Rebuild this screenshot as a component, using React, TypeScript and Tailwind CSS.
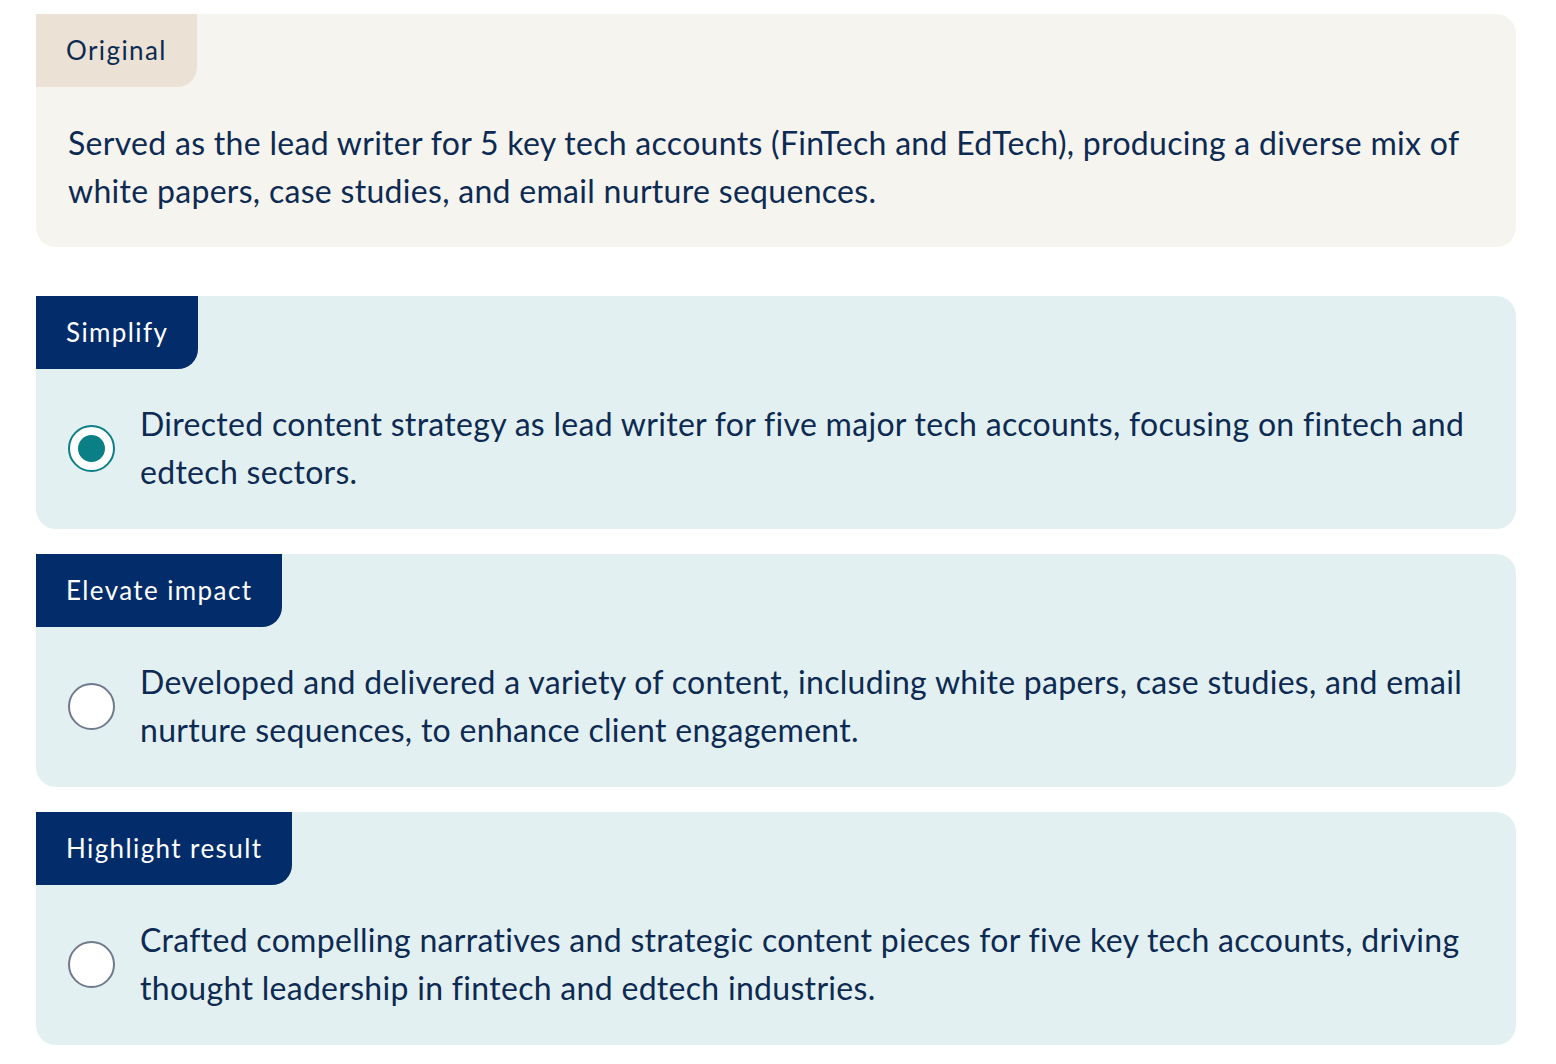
import React from "react";

const font = { fontFamily: "Lato, 'Noto Sans', sans-serif" };

function Tab({ label, variant }: { label: string; variant: "orig" | "opt" }) {
  return (
    <div
      className={
        "inline-flex h-[73px] items-center rounded-br-[20px] pl-[30px] pr-[30px] text-[26px] tracking-[1.4px] " +
        (variant === "orig" ? "bg-[#ebe2d5] text-[#0d2a52]" : "bg-[#022d6a] text-white")
      }
    >
      {label}
    </div>
  );
}

function Radio({ checked }: { checked: boolean }) {
  return checked ? (
    <div className="flex h-[47px] w-[47px] shrink-0 items-center justify-center rounded-full border-2 border-[#0a7f86] bg-white">
      <div className="h-[27px] w-[27px] rounded-full bg-[#0a7f86]" />
    </div>
  ) : (
    <div className="h-[47px] w-[47px] shrink-0 rounded-full border-2 border-[#6f7a8c] bg-white" />
  );
}

function Option({ label, text, checked }: { label: string; text: string; checked: boolean }) {
  return (
    <div className="w-[1480px] overflow-hidden rounded-[20px] rounded-tl-none bg-[#e3f0f1]">
      <Tab label={label} variant="opt" />
      <div className="flex items-center gap-[25px] pl-[32px] pr-[26px] pt-[31px] pb-[33px]">
        <Radio checked={checked} />
        <p className="text-[32px] leading-[48px] tracking-[0.3px] text-[#0d2a52]">{text}</p>
      </div>
    </div>
  );
}

export default function App() {
  return (
    <div className="min-h-[1064px] bg-white pl-[36px] pt-[14px]" style={font}>
      <div className="w-[1480px] overflow-hidden rounded-[20px] rounded-tl-none bg-[#f5f4ef]">
        <Tab label="Original" variant="orig" />
        <p className="pl-[32px] pr-[26px] pt-[32px] pb-[32px] text-[32px] leading-[48px] tracking-[0.3px] text-[#0d2a52]">
          Served as the lead writer for 5 key tech accounts (FinTech and EdTech), producing a diverse mix of white papers, case studies, and email nurture sequences.
        </p>
      </div>
      <div className="mt-[49px] flex flex-col gap-[25px]">
        <Option
          label="Simplify"
          checked
          text="Directed content strategy as lead writer for five major tech accounts, focusing on fintech and edtech sectors."
        />
        <Option
          label="Elevate impact"
          checked={false}
          text="Developed and delivered a variety of content, including white papers, case studies, and email nurture sequences, to enhance client engagement."
        />
        <Option
          label="Highlight result"
          checked={false}
          text="Crafted compelling narratives and strategic content pieces for five key tech accounts, driving thought leadership in fintech and edtech industries."
        />
      </div>
    </div>
  );
}
